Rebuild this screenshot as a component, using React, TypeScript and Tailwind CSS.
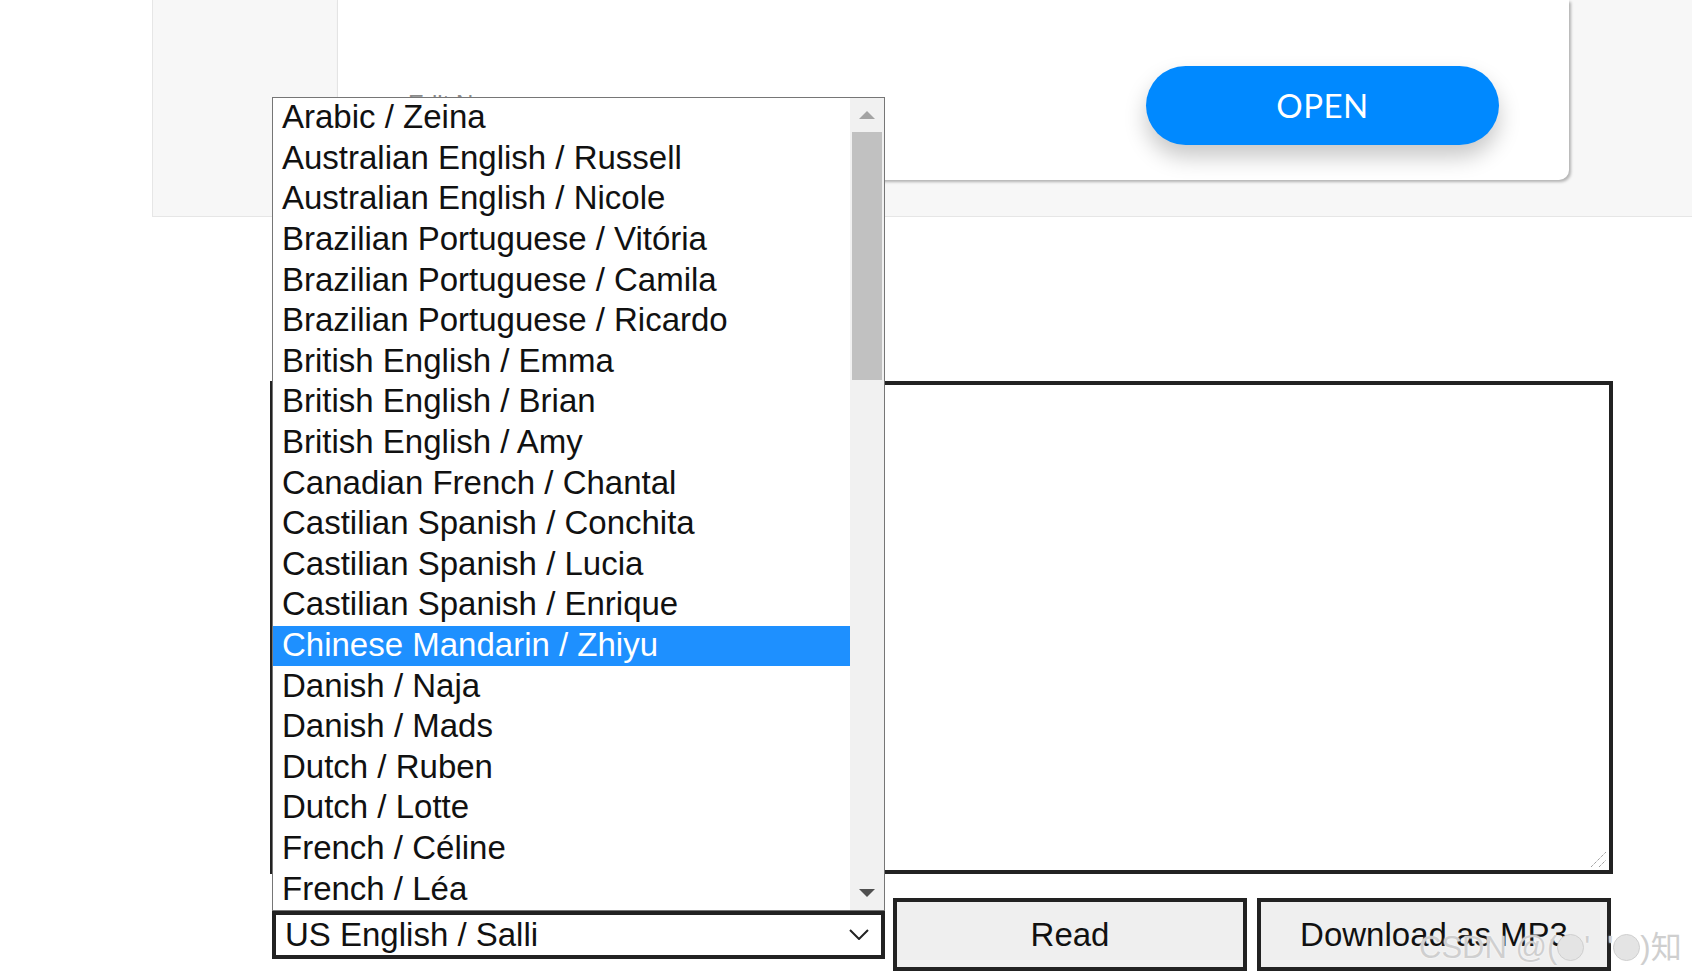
import { useState } from 'react';

const VOICES = [
    'Arabic / Zeina',
    'Australian English / Russell',
    'Australian English / Nicole',
    'Brazilian Portuguese / Vitória',
    'Brazilian Portuguese / Camila',
    'Brazilian Portuguese / Ricardo',
    'British English / Emma',
    'British English / Brian',
    'British English / Amy',
    'Canadian French / Chantal',
    'Castilian Spanish / Conchita',
    'Castilian Spanish / Lucia',
    'Castilian Spanish / Enrique',
    'Chinese Mandarin / Zhiyu',
    'Danish / Naja',
    'Danish / Mads',
    'Dutch / Ruben',
    'Dutch / Lotte',
    'French / Céline',
    'French / Léa',
];

const FONT = "font-['Liberation_Sans',Arial,sans-serif]";

function Dot() {
    return <span className="inline-block w-[27px] h-[27px] rounded-full bg-[#e4e4e4] border border-[#cfcfcf] align-[-3px]" />;
}

export default function App() {
    const [hovered, setHovered] = useState('Chinese Mandarin / Zhiyu');
    const [text, setText] = useState('');

    return (
        <div className={`relative w-[1692px] h-[979px] overflow-hidden bg-white ${FONT}`}>
            {/* Top band with the card */}
            <div className="ml-[152px] h-[217px] bg-[#f7f7f7] border-l border-b border-[#e6e6e6] flex">
                <div className="ml-[184px] w-[1232px] h-[180px] bg-white border-l border-[#e4e4e4] rounded-br-[10px] shadow-[2px_2px_3px_rgba(0,0,0,0.28)] flex justify-between items-start pl-[70px] pr-[70px]">
                    <span className="mt-[92px] text-[24px] leading-none text-[#8a8a8a]">Edit Name</span>
                    <button className="mt-[66px] w-[353px] h-[79px] rounded-full bg-[#0089ff] text-white text-[33px] font-['Lato',sans-serif] tracking-[0.5px] shadow-[0_12px_22px_rgba(0,0,0,0.22)]">
                        OPEN
                    </button>
                </div>
            </div>

            {/* Reader form */}
            <div className="pl-[270px] pr-[79px] pt-[164px]">
                <div className="relative">
                    <textarea
                        value={text}
                        onChange={(e) => setText(e.target.value)}
                        className="block w-full h-[493px] border-4 border-[#222] bg-white resize-none outline-none"
                    />
                    <svg className="absolute right-[6px] bottom-[6px] w-[17px] h-[17px]" viewBox="0 0 17 17">
                        <path d="M1 16 L16 1 M9 16 L16 9" stroke="#777" strokeWidth="1" strokeDasharray="1 1" />
                    </svg>
                </div>

                <div className="mt-[24px] flex items-center">
                    <div className="ml-[2px] w-[613px] h-[48px] border-4 border-[#222] bg-white flex items-center justify-between pl-[9px] pr-[12px]">
                        <span className="text-[33px] leading-none text-[#111]">US English / Salli</span>
                        <svg className="w-[20px] h-[11px]" viewBox="0 0 20 11">
                            <path d="M1 1 L10 10 L19 1" fill="none" stroke="#222" strokeWidth="2" />
                        </svg>
                    </div>
                    <button className="ml-[8px] w-[354px] h-[73px] border-4 border-[#222] bg-[#efefef] text-[33px] text-[#111]">
                        Read
                    </button>
                    <button className="ml-[10px] w-[354px] h-[73px] border-4 border-[#222] bg-[#efefef] text-[33px] text-[#111]">
                        Download as MP3
                    </button>
                </div>
            </div>

            {/* Open select list */}
            <div className="absolute left-[272px] top-[97px] w-[613px] h-[814px] border border-[#767676] bg-white flex">
                <ul className="flex-1">
                    {VOICES.map((v) => (
                        <li
                            key={v}
                            onMouseEnter={() => setHovered(v)}
                            className={`h-[40.6px] flex items-center pl-[9px] pb-[3px] text-[33px] leading-none whitespace-nowrap ${
                                hovered === v ? 'bg-[#1e90ff] text-white' : 'text-[#111]'
                            }`}
                        >
                            {v}
                        </li>
                    ))}
                </ul>
                <div className="w-[34px] bg-[#f1f1f1] flex flex-col items-center">
                    <div className="h-[34px] w-full flex items-center justify-center">
                        <svg className="w-[16px] h-[8px]" viewBox="0 0 16 8">
                            <path d="M0 8 L8 0 L16 8 Z" fill="#a3a3a3" />
                        </svg>
                    </div>
                    <div className="w-[30px] h-[248px] bg-[#c1c1c1]" />
                    <div className="flex-1" />
                    <div className="h-[34px] w-full flex items-center justify-center">
                        <svg className="w-[16px] h-[8px]" viewBox="0 0 16 8">
                            <path d="M0 0 L16 0 L8 8 Z" fill="#505050" />
                        </svg>
                    </div>
                </div>
            </div>

            {/* Watermark */}
            <div className="absolute left-[1419px] top-[932px] text-[31px] leading-none whitespace-nowrap text-[#cfcfcf] font-['Liberation_Sans','Noto_Sans_CJK_SC',sans-serif] [text-shadow:0_0_2px_#fff]">
                CSDN @(<Dot />'&nbsp;&nbsp;'<Dot />)知
            </div>
        </div>
    );
}
